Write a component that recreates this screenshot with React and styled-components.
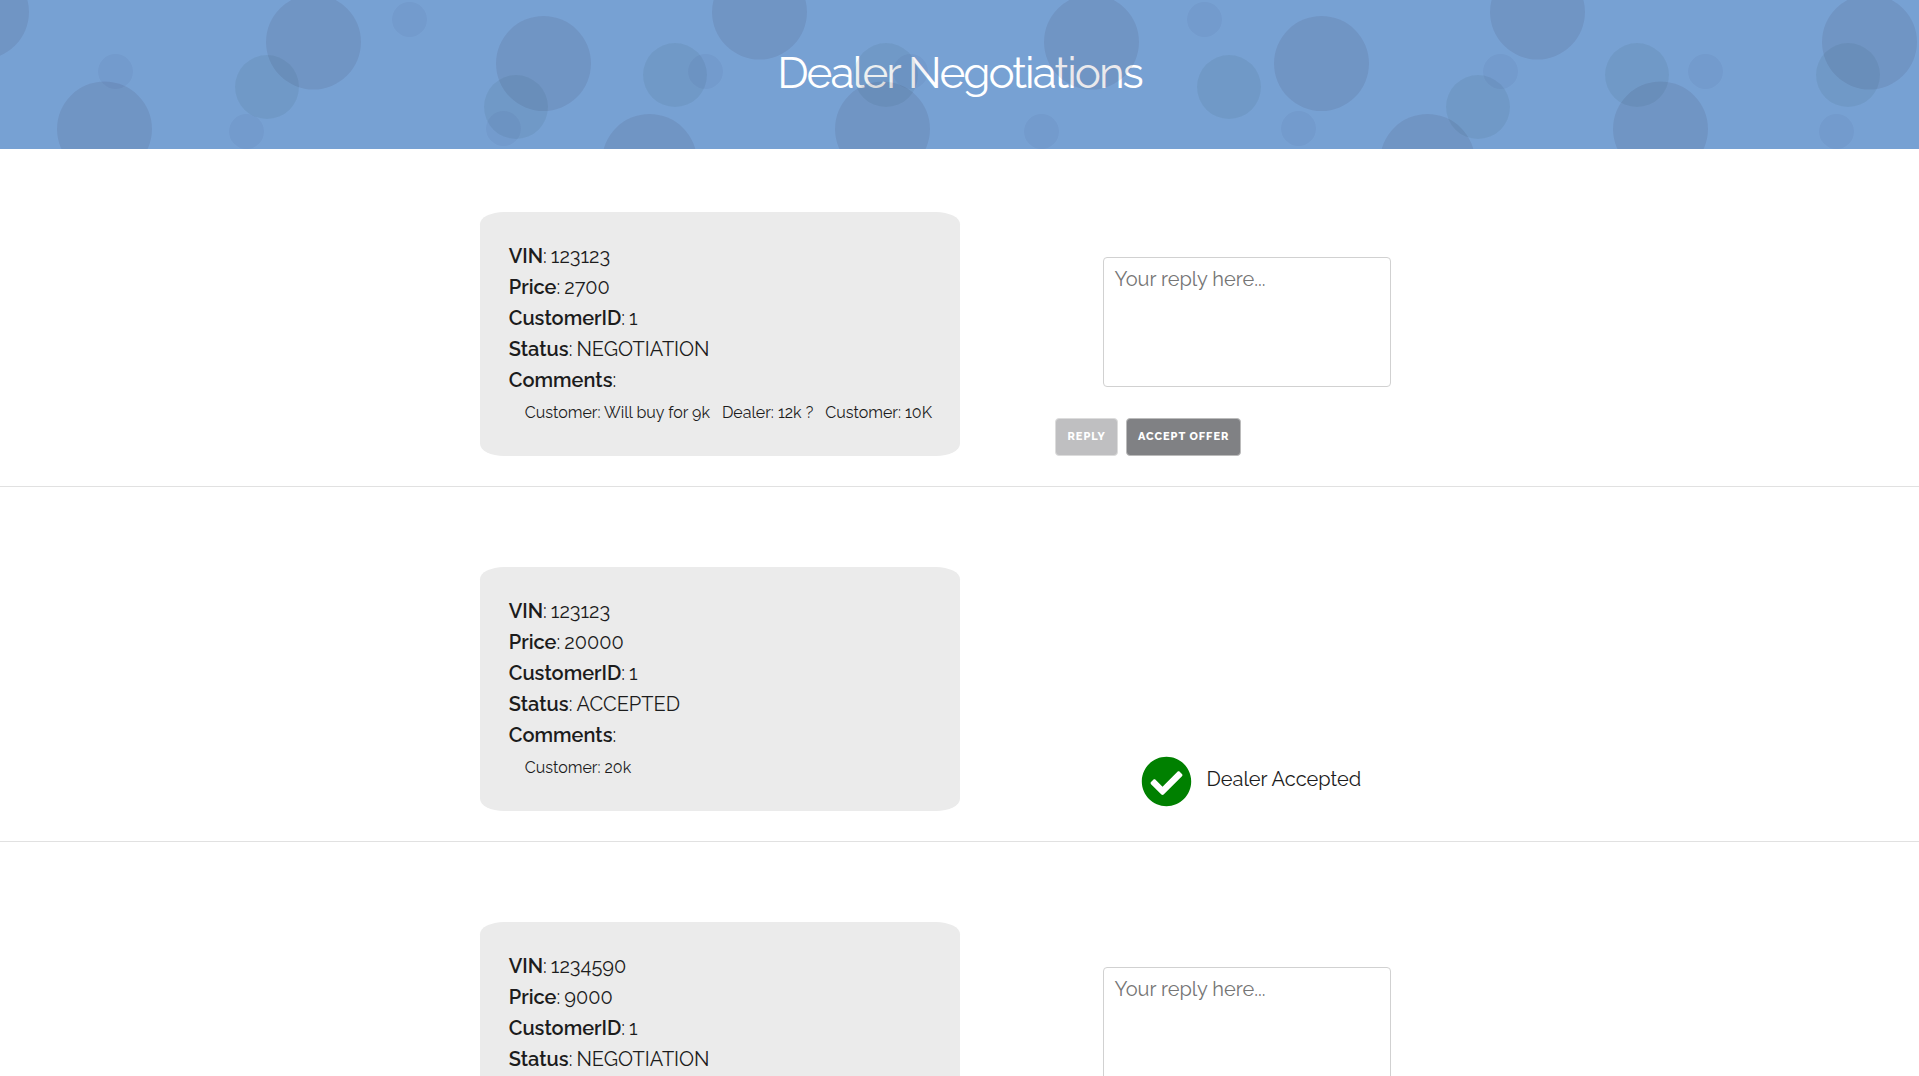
import React, { useState } from "react";
import styled, { createGlobalStyle } from "styled-components";
import { FaCheckCircle } from "react-icons/fa";

const GlobalStyle = createGlobalStyle`
  *, *::before, *::after { box-sizing: border-box; }
  body {
    margin: 0;
    background: #fff;
    color: #1c1c1c;
    font-family: Raleway, Lato, "Open Sans", sans-serif;
    font-size: 20px;
    line-height: 31px;
  }
`;

const Header = styled.header`
  position: relative;
  overflow: hidden;
  padding: 45px 24px 48px;
  background: #77a1d3;
  text-align: center;
`;

const Title = styled.h1`
  margin: 0;
  color: #fff;
  font-size: 44px;
  font-weight: 400;
  letter-spacing: -2px;
  line-height: 56px;
`;

const BubbleLayer = styled.svg`
  position: absolute;
  inset: 0;
  width: 100%;
  height: 100%;
  pointer-events: none;
`;

const Row = styled.section`
  display: grid;
  grid-template-columns: 25% 25% 5% 1fr;
  align-items: end;
  padding: ${(p) => (p.$first ? 63 : 80)}px 0 30px;
  border-bottom: 1px solid #e1e1e1;
`;

const Card = styled.article`
  grid-column: 2;
  padding: 29px 29px 28px;
  border-radius: 5%;
  background: #ebebeb;
`;

const Fields = styled.dl`
  margin: 0;
`;

const Field = styled.div`
  display: flex;
  gap: 4px;
`;

const Label = styled.dt`
  white-space: nowrap;

  b {
    font-weight: 600;
  }
`;

const Value = styled.dd`
  margin: 0;
`;

const Comments = styled.ul`
  display: flex;
  gap: 12px;
  min-height: 32px;
  margin: 0;
  padding: 1px 0 0 16px;
  list-style: none;
  font-size: 16px;
  white-space: nowrap;
`;

const Panel = styled.form`
  grid-column: 4;
  display: flex;
  flex-direction: column;
  gap: 31px;
`;

const ReplyBox = styled.textarea`
  display: block;
  width: calc(100% / 3);
  min-width: 240px;
  height: 130px;
  margin-left: 48px;
  padding: 6px 10px;
  border: 1px solid #d1d1d1;
  border-radius: 4px;
  background: #fff;
  color: #222;
  font: inherit;
  resize: none;

  &::placeholder {
    color: #757575;
    opacity: 1;
  }
`;

const Actions = styled.div`
  display: flex;
  gap: 8px;
`;

const Button = styled.button`
  height: 38px;
  padding: 0 11px;
  border: 1px solid #bbb;
  border-radius: 4px;
  background: #808184;
  color: #fff;
  font-family: inherit;
  font-size: 11px;
  font-weight: 800;
  letter-spacing: 1px;
  line-height: 36px;
  text-transform: uppercase;
  white-space: nowrap;
  cursor: pointer;

  &:disabled {
    opacity: 0.5;
    cursor: default;
  }
`;

const Accepted = styled.p`
  grid-column: 4;
  display: flex;
  align-items: center;
  gap: 14px;
  margin: 0;
  padding: 0 0 4px 86px;

  svg {
    width: 51px;
    height: 51px;
    color: green;
  }

  span {
    padding-bottom: 4px;
  }
`;

const bubbleSets = [
  {
    id: "large", period: 778, r: 47.5, fill: "#2f2945", opacity: 0.1,
    points: [[-18.5, 12], [104.5, 129], [313.5, 42], [543.5, 63.5], [649.5, 161.5], [759.5, 12]],
  },
  {
    id: "medium", period: 962, r: 32, fill: "#1f3d3d", opacity: 0.08,
    points: [[267, 87], [516, 107], [675, 75], [886, 75]],
  },
  {
    id: "small", period: 795, r: 17.5, fill: "#2c2c68", opacity: 0.05,
    points: [[115.5, 71.5], [246.5, 131.5], [409.5, 19.5], [503.5, 128.5], [705.5, 71.5]],
  },
];

function Bubbles() {
  return (
    <BubbleLayer aria-hidden="true">
      <defs>
        {bubbleSets.map((s) => (
          <pattern key={s.id} id={s.id} width={s.period} height="240" patternUnits="userSpaceOnUse">
            {s.points.map(([x, y]) => (
              <circle key={`${x}-${y}`} cx={x} cy={y} r={s.r} fill={s.fill} fillOpacity={s.opacity} />
            ))}
          </pattern>
        ))}
      </defs>
      {bubbleSets.map((s) => (
        <rect key={s.id} width="100%" height="100%" fill={`url(#${s.id})`} />
      ))}
    </BubbleLayer>
  );
}

const offers = [
  {
    id: 1, vin: "123123", price: 2700, customer: 1, status: "NEGOTIATION",
    comments: ["Customer: Will buy for 9k", "Dealer: 12k ?", "Customer: 10K"],
  },
  { id: 2, vin: "123123", price: 20000, customer: 1, status: "ACCEPTED", comments: ["Customer: 20k"] },
  { id: 3, vin: "1234590", price: 9000, customer: 1, status: "NEGOTIATION", comments: [] },
];

function ReplyPanel() {
  const [reply, setReply] = useState("");
  return (
    <Panel onSubmit={(e) => e.preventDefault()}>
      <ReplyBox
        aria-label="Your reply"
        placeholder="Your reply here..."
        value={reply}
        onChange={(e) => setReply(e.target.value)}
      />
      <Actions>
        <Button type="submit" disabled={!reply}>Reply</Button>
        <Button type="button">Accept offer</Button>
      </Actions>
    </Panel>
  );
}

function Offer({ offer, first }) {
  const fields = [
    ["VIN", offer.vin],
    ["Price", offer.price],
    ["CustomerID", offer.customer],
    ["Status", offer.status],
    ["Comments", ""],
  ];
  return (
    <Row $first={first}>
      <Card>
        <Fields>
          {fields.map(([label, value]) => (
            <Field key={label}>
              <Label><b>{label}</b>:</Label>
              <Value>{value}</Value>
            </Field>
          ))}
        </Fields>
        <Comments>
          {offer.comments.map((c) => <li key={c}>{c}</li>)}
        </Comments>
      </Card>
      {offer.status === "ACCEPTED" ? (
        <Accepted><FaCheckCircle aria-hidden="true" /><span>Dealer Accepted</span></Accepted>
      ) : (
        <ReplyPanel />
      )}
    </Row>
  );
}

export default function App() {
  return (
    <>
      <GlobalStyle />
      <Header>
        <Title>Dealer Negotiations</Title>
        <Bubbles />
      </Header>
      <main>
        {offers.map((offer, i) => <Offer key={offer.id} offer={offer} first={i === 0} />)}
      </main>
    </>
  );
}
